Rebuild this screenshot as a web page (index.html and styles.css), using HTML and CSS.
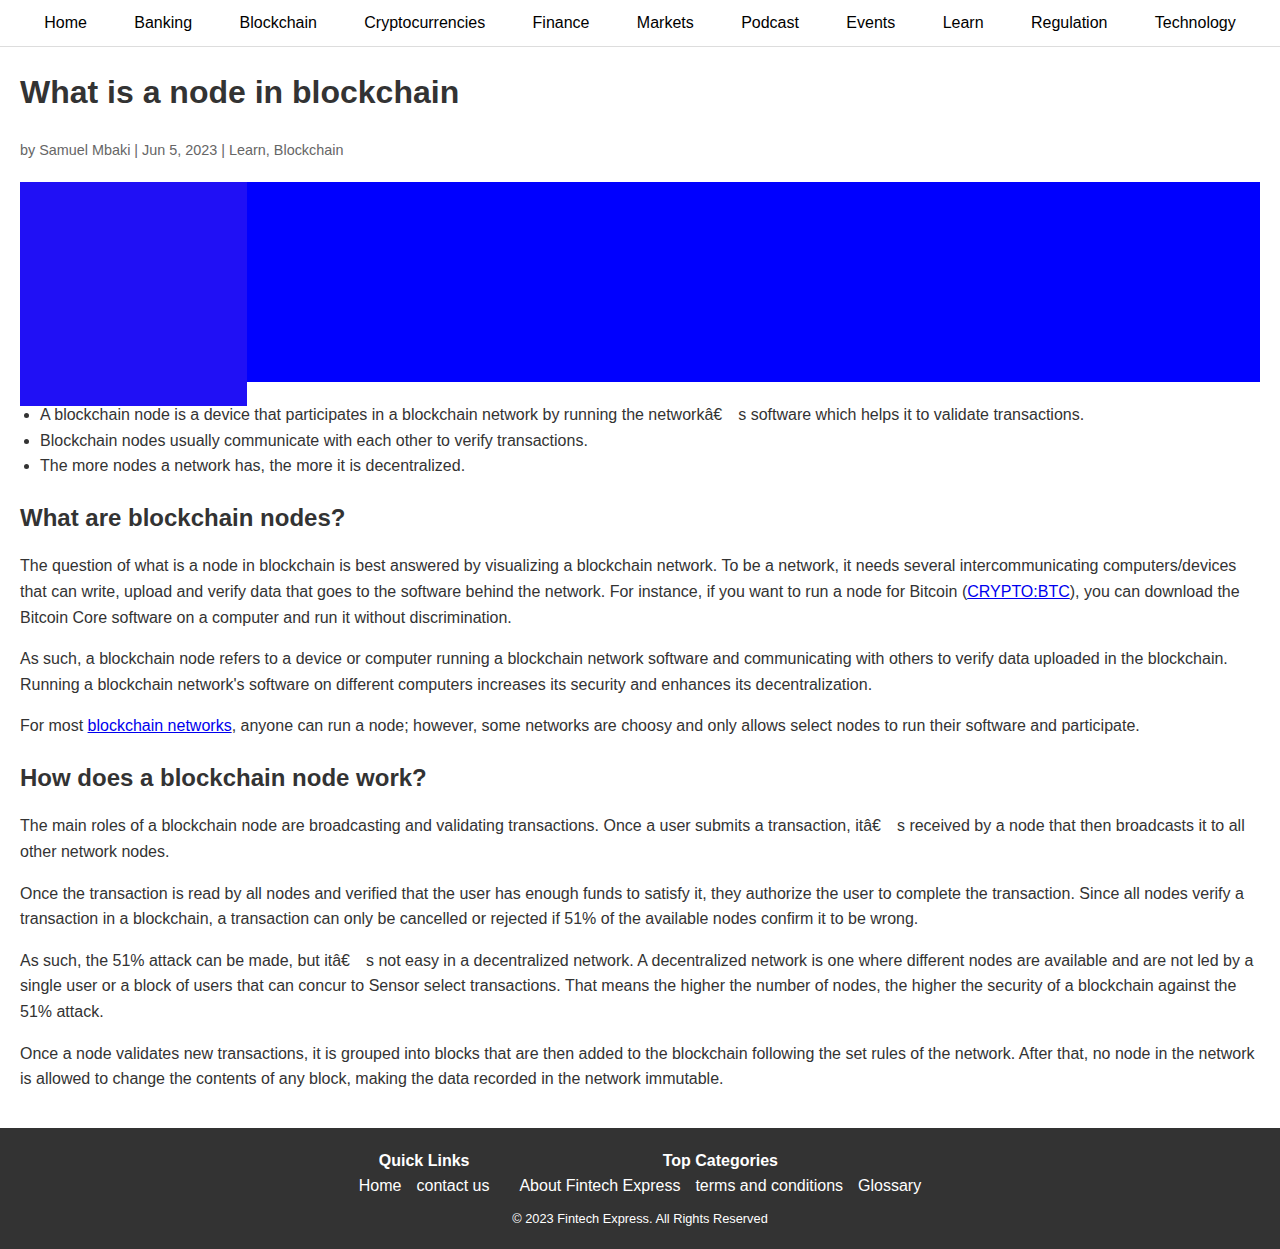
FILE: index.html
```html
<!DOCTYPE html>
<html lang="en">
<head>
<meta charset="utf-8">
<title>What is a node in blockchain</title>
<link rel="stylesheet" href="styles.css">
</head>
<body>
<nav class="topnav">
  <a href="#">Home</a>
  <a href="#">Banking</a>
  <a href="#">Blockchain</a>
  <a href="#">Cryptocurrencies</a>
  <a href="#">Finance</a>
  <a href="#">Markets</a>
  <a href="#">Podcast</a>
  <a href="#">Events</a>
  <a href="#">Learn</a>
  <a href="#">Regulation</a>
  <a href="#">Technology</a>
</nav>
<main class="article">
  <h1 class="title">What is a node in blockchain</h1>
  <p class="meta">by Samuel Mbaki | Jun 5, 2023 | Learn, Blockchain</p>
  <div class="hero">
    <div class="hero-banner"></div>
    <div class="hero-thumb"></div>
  </div>
  <ul class="keypoints">
    <li>A blockchain node is a device that participates in a blockchain network by running the networkâ€&emsp;s software which helps it to validate transactions.</li>
    <li>Blockchain nodes usually communicate with each other to verify transactions.</li>
    <li>The more nodes a network has, the more it is decentralized.</li>
  </ul>
  <h2 class="section-title">What are blockchain nodes?</h2>
  <p>The question of what is a node in blockchain is best answered by visualizing a blockchain network. To be a network, it needs several intercommunicating computers/devices that can write, upload and verify data that goes to the software behind the network. For instance, if you want to run a node for Bitcoin (<a href="#">CRYPTO:BTC</a>), you can download the Bitcoin Core software on a computer and run it without discrimination.</p>
  <p>As such, a blockchain node refers to a device or computer running a blockchain network software and communicating with others to verify data uploaded in the blockchain. Running a blockchain network's software on different computers increases its security and enhances its decentralization.</p>
  <p>For most <a href="#">blockchain networks</a>, anyone can run a node; however, some networks are choosy and only allows select nodes to run their software and participate.</p>
  <h2 class="section-title">How does a blockchain node work?</h2>
  <p>The main roles of a blockchain node are broadcasting and validating transactions. Once a user submits a transaction, itâ€&emsp;s received by a node that then broadcasts it to all other network nodes.</p>
  <p>Once the transaction is read by all nodes and verified that the user has enough funds to satisfy it, they authorize the user to complete the transaction. Since all nodes verify a transaction in a blockchain, a transaction can only be cancelled or rejected if 51% of the available nodes confirm it to be wrong.</p>
  <p>As such, the 51% attack can be made, but itâ€&emsp;s not easy in a decentralized network. A decentralized network is one where different nodes are available and are not led by a single user or a block of users that can concur to Sensor select transactions. That means the higher the number of nodes, the higher the security of a blockchain against the 51% attack.</p>
  <p>Once a node validates new transactions, it is grouped into blocks that are then added to the blockchain following the set rules of the network. After that, no node in the network is allowed to change the contents of any block, making the data recorded in the network immutable.</p>
</main>
<footer class="site-footer">
  <div class="footer-cols">
    <div class="footer-col">
      <h3 class="footer-heading">Quick Links</h3>
      <div class="footer-links">
        <a href="#">Home</a>
        <a href="#">contact us</a>
      </div>
    </div>
    <div class="footer-col">
      <h3 class="footer-heading">Top Categories</h3>
      <div class="footer-links">
        <a href="#">About Fintech Express</a>
        <a href="#">terms and conditions</a>
        <a href="#">Glossary</a>
      </div>
    </div>
  </div>
  <p class="copyright">© 2023 Fintech Express. All Rights Reserved</p>
</footer>
</body>
</html>
```

FILE: styles.css
```css
* { box-sizing: border-box; }

body {
  margin: 0;
  font-family: "Liberation Sans", Arial, sans-serif;
  font-size: 16px;
  line-height: 1.6;
  color: #333;
  background: #fff;
}

.topnav {
  display: flex;
  justify-content: center;
  align-items: center;
  height: 47px;
  border-bottom: 1px solid #ddd;
}

.topnav a {
  color: #000;
  text-decoration: none;
  padding: 0 23.7px;
  line-height: 44px;
}

.article {
  padding: 20px 20px 20px;
}

.title {
  margin: 0 0 21px;
  font-size: 32px;
  line-height: 1.6;
  font-weight: bold;
  color: #333;
}

.article .meta {
  margin: 0 0 20px;
  font-size: 14.4px;
  color: #666;
}

.hero {
  display: grid;
  align-items: start;
}

.hero-banner,
.hero-thumb {
  grid-area: 1 / 1;
}

.hero-banner {
  height: 200px;
  background: #0000ff;
}

.hero-thumb {
  width: 227px;
  height: 224px;
  margin-bottom: -4px;
  background: #2010f5;
}

.keypoints {
  margin: 0 0 16px;
  padding-left: 20px;
}

.section-title {
  margin: 20px 0 14px;
  font-size: 24px;
  line-height: 1.6;
  font-weight: bold;
  color: #333;
}

.article p {
  margin: 16px 0;
}

.article a {
  color: #0000ee;
  text-decoration: underline;
}

.site-footer {
  background: #333;
  color: #fff;
  padding: 20px 20px 20px;
  text-align: center;
}

.footer-cols {
  display: flex;
  justify-content: center;
  gap: 30px;
}

.footer-col {
  display: flex;
  flex-direction: column;
  align-items: center;
}

.footer-heading {
  margin: 0;
  font-size: 16px;
  font-weight: bold;
  line-height: 1.6;
}

.footer-links {
  display: flex;
  gap: 15px;
}

.footer-links a {
  color: #fff;
  text-decoration: none;
}

.copyright {
  margin: 10px 0 0;
  font-size: 12.8px;
}
```
